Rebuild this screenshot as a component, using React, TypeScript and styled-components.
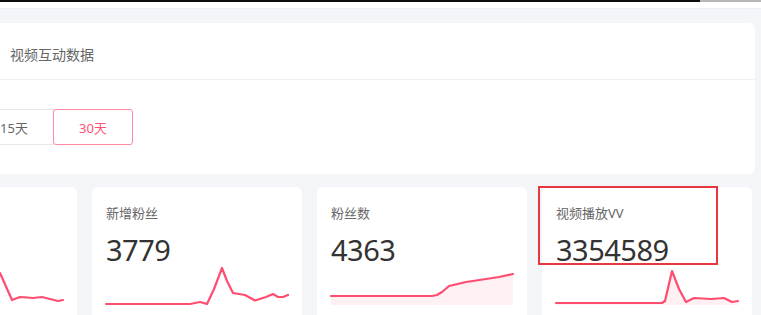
import React from 'react';
import styled, { createGlobalStyle } from 'styled-components';

interface Metric {
    id: string;
    label: string;
    value: string;
    line: string;
    area?: boolean;
    marked?: boolean;
}

const metrics: Metric[] = [
    {
        id: 'likes',
        label: '点赞数',
        value: '812',
        line: '0,38 40,38 70,36 90,28 104,4 112,2 119,8 131,35 139,32 152,33 161,32 177,36 182,35',
    },
    {
        id: 'new-fans',
        label: '新增粉丝',
        value: '3779',
        line: '0,39 84,39 94,37 101,39 108,24 116,3 121,16 127,28 139,30 149,35.5 160,32 167,29 172,32 177,32 182,30',
    },
    {
        id: 'fans',
        label: '粉丝数',
        value: '4363',
        line: '0,31 101,31 106,30 111,27 118,21 135,17 155,14 168,12 182,9',
        area: true,
    },
    {
        id: 'vv',
        label: '视频播放VV',
        value: '3354589',
        line: '0,38 106,38 109,36 116,6 123,24 130,37 138,33 155,34 168,33 176,37 182,36',
        area: true,
        marked: true,
    },
];

const ranges = ['7天', '15天', '30天'];

const GlobalStyle = createGlobalStyle`
    body {
        margin: 0;
        background: #ffffff;
        font-family: "Noto Sans", "Noto Sans CJK SC", sans-serif;
    }
`;

const TopBar = styled.div`
    display: flex;
    height: 2px;
`;

const TopBarTrack = styled.div<{ $grey?: boolean }>`
    flex: ${({ $grey }) => ($grey ? '0 0 61px' : '1')};
    background: ${({ $grey }) => ($grey ? '#b8b8b8' : '#0b0b0b')};
`;

const Main = styled.main`
    margin-top: 6px;
    height: 307px;
    box-sizing: border-box;
    border-top: 1px solid #eceef3;
    background: #f4f5f9;
    padding: 14px 6px 0 0;
    overflow: hidden;
`;

const Content = styled.div`
    margin-left: -133px;
`;

const Panel = styled.section`
    background: #ffffff;
    border-radius: 6px;
`;

const PanelHeader = styled.div`
    height: 57px;
    box-sizing: border-box;
    padding: 8px 0 0 143px;
    line-height: 48px;
    font-size: 14px;
    color: #666666;
    border-bottom: 1px solid #f0f0f2;
`;

const RangeBar = styled.div`
    display: flex;
    padding: 29px 29px 29px;
`;

const RangeButton = styled.button<{ $active?: boolean }>`
    position: relative;
    z-index: ${({ $active }) => ($active ? 1 : 0)};
    width: 80px;
    height: 36px;
    margin-left: -1px;
    padding: 0;
    border: 1px solid ${({ $active }) => ($active ? '#ff8aa0' : '#e8e8ea')};
    border-radius: ${({ $active }) => ($active ? '3px' : '0')};
    background: #ffffff;
    font-family: inherit;
    font-size: 13px;
    color: ${({ $active }) => ($active ? '#ff5474' : '#666666')};
    cursor: pointer;
`;

const CardRow = styled.div`
    display: grid;
    grid-template-columns: repeat(4, 210px);
    gap: 15px;
    margin-top: 13px;
`;

const Card = styled.div`
    position: relative;
    height: 150px;
    box-sizing: border-box;
    padding: 19px 14px 0;
    background: #ffffff;
    border-radius: 6px;
`;

const CardLabel = styled.div`
    font-size: 13px;
    line-height: 14px;
    color: #666666;
`;

const CardValue = styled.div`
    margin-top: 15px;
    font-size: 29px;
    line-height: 30px;
    letter-spacing: -0.5px;
    color: #333333;
`;

const Spark = styled.svg`
    display: block;
    width: 182px;
    height: 40px;
    overflow: visible;
`;

const Marker = styled.div`
    position: absolute;
    left: -4px;
    top: -1px;
    width: 180px;
    height: 79px;
    box-sizing: border-box;
    border: 2px solid #e8373f;
`;

const Sparkline: React.FC<{ points: string; area?: boolean }> = ({ points, area }) => (
    <Spark viewBox="0 0 182 40">
        {area && <polygon points={`0,40 ${points} 182,40`} fill="#fff0f3" />}
        <polyline
            points={points}
            fill="none"
            stroke="#ff4d6f"
            strokeWidth="2.2"
            strokeLinejoin="round"
            strokeLinecap="round"
        />
    </Spark>
);

const App: React.FC = () => (
    <>
        <GlobalStyle />
        <TopBar>
            <TopBarTrack />
            <TopBarTrack $grey />
        </TopBar>
        <Main>
            <Content>
                <Panel>
                    <PanelHeader>视频互动数据</PanelHeader>
                    <RangeBar>
                        {ranges.map((r) => (
                            <RangeButton key={r} $active={r === '30天'}>
                                {r}
                            </RangeButton>
                        ))}
                    </RangeBar>
                </Panel>
                <CardRow>
                    {metrics.map((m) => (
                        <Card key={m.id}>
                            <CardLabel>{m.label}</CardLabel>
                            <CardValue>{m.value}</CardValue>
                            <Sparkline points={m.line} area={m.area} />
                            {m.marked && <Marker />}
                        </Card>
                    ))}
                </CardRow>
            </Content>
        </Main>
    </>
);

export default App;
